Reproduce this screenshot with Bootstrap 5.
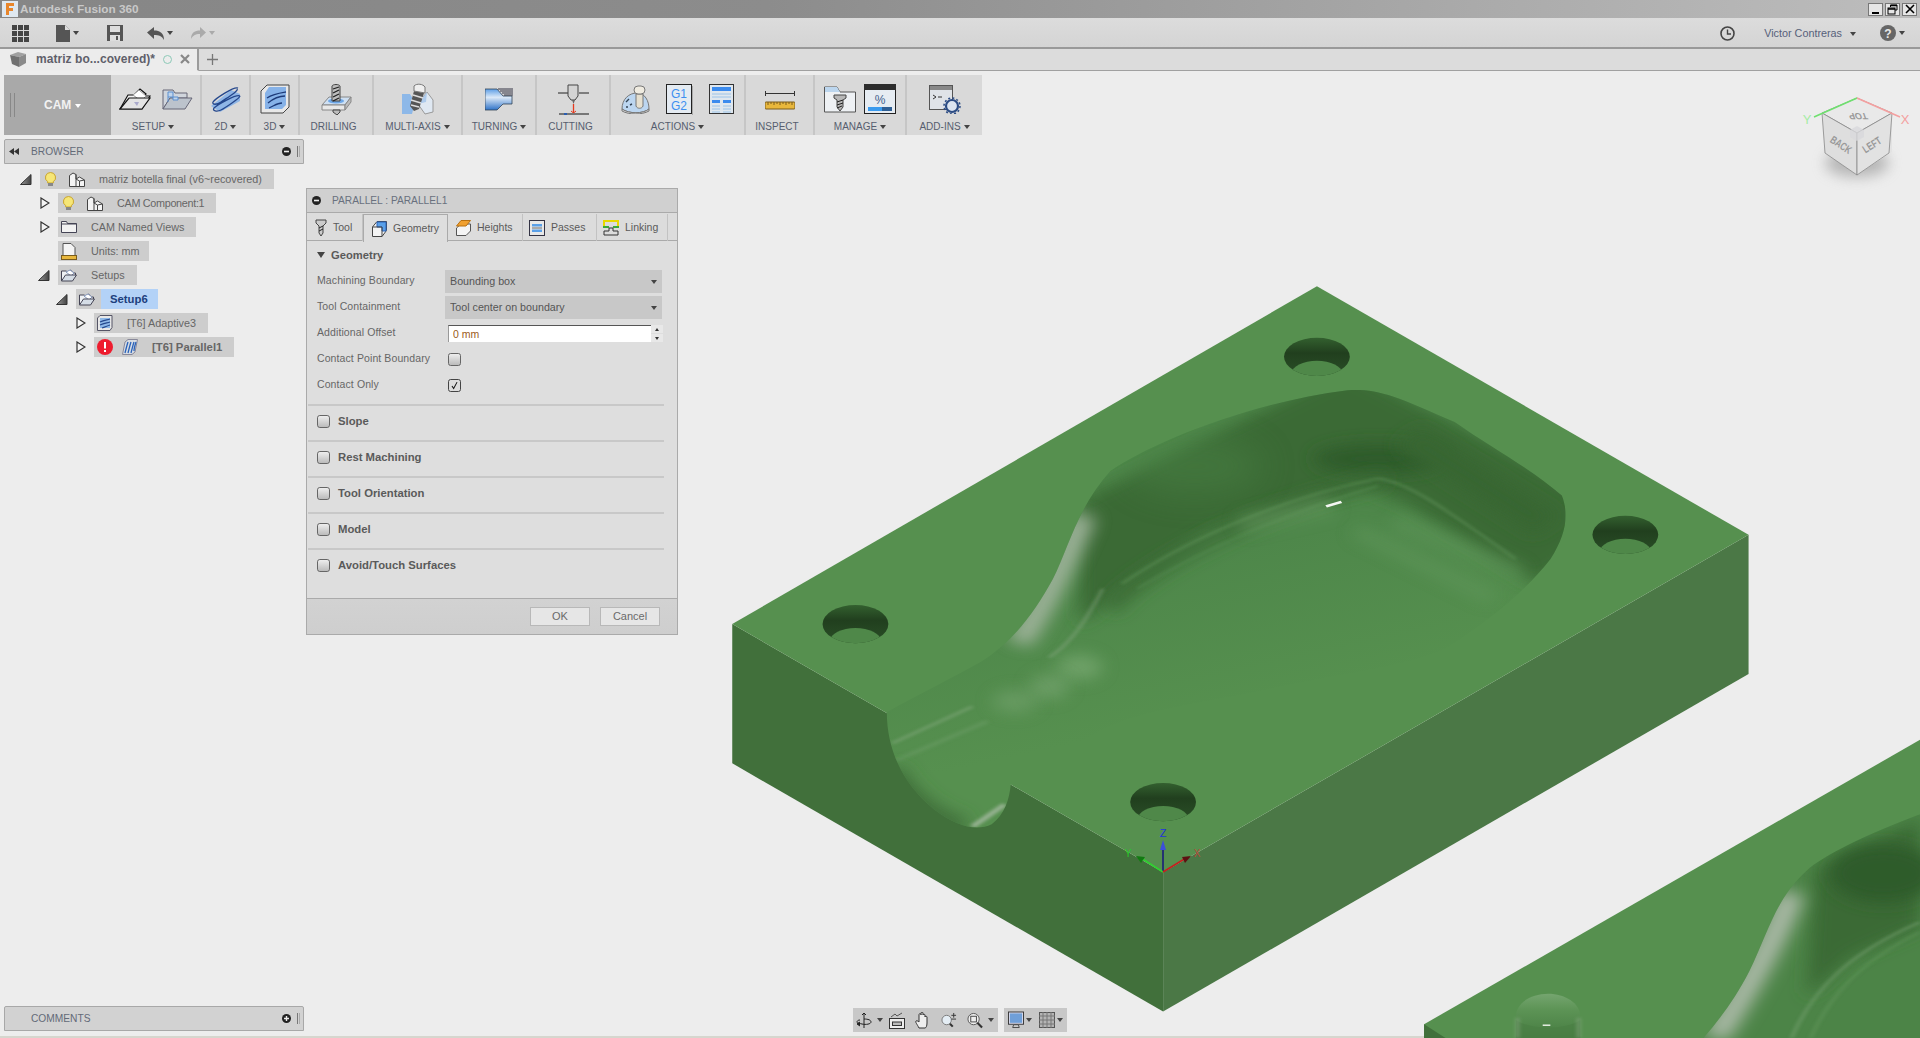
<!DOCTYPE html>
<html lang="en">
<head>
  <meta charset="UTF-8">
  <title>Autodesk Fusion 360</title>
  <link href="https://cdn.jsdelivr.net/npm/bootstrap@5.3.0/dist/css/bootstrap.min.css" rel="stylesheet">
  <style>
    html, body { height: 100%; }
    body { background: #ededed; color: #5a5a5a; font-family: "Liberation Sans", Arial, sans-serif; font-size: 10px; overflow: hidden; }
    svg { display: block; }
    .app-shell { height: 1038px; }
    /* top bars */
    .title-bar { height: 18px; background: linear-gradient(to right, #868686, #8c8c8c 40%, #bdbdbd); padding-left: 2px; }
    .title-text { color: #c9c9c9; font-weight: 700; font-size: 11.8px; margin-left: 2px; line-height: 18px; }
    .win-btn { width: 15px; height: 13px; background: #e6e6e6; border: 1px solid #777; margin-left: 2px; }
    .win-btns { margin-right: 3px; }
    .quick-bar { height: 31px; background: linear-gradient(#dcdcdc, #d4d4d4); border-bottom: 2px solid #999; padding: 1px 0 0 12px; }
    .qb-file { margin-left: 27px; }
    .qb-save { margin-left: 28px; }
    .qb-undo { margin-left: 24px; }
    .qb-redo { margin-left: 18px; }
    .qb-clock { margin-left: auto; margin-right: 29px; }
    .user-name { font-size: 10.8px; color: #56607a; }
    .qb-help { margin-left: 24px; margin-right: 15px; }
    .caret-down { display: inline-block; width: 0; height: 0; border-left: 3px solid transparent; border-right: 3px solid transparent; border-top: 4px solid #444; margin-left: 3px; vertical-align: 1px; }
    .caret-pale { border-top-color: #aaa; }
    .caret-white { border-top-color: #fff; }
    .doc-tabs { height: 22px; background: #dcdcdc; border-bottom: 1px solid #a0a0a0; }
    .doc-tab { width: 199px; height: 22px; background: #ececec; border-right: 2px solid #9c9c9c; padding-left: 10px; border-bottom: 1px solid #ececec; }
    .doc-name { font-size: 12px; color: #5f5f6a; margin-left: 10px; font-weight: 700; letter-spacing: .05px; }
    .doc-status { width: 9px; height: 9px; border: 1.5px solid #8cc9b7; border-radius: 50%; margin-left: 8px; }
    .doc-close { margin-left: 8px; }
    .doc-plus { margin-left: 8px; }
    /* workspace */
    .workspace { height: 967px; border-bottom: 2px solid #d6d6ce; }
    .model-canvas { position: absolute; left: 0; top: 0; }
    .side-col { position: relative; height: 960px; padding-left: 4px; width: 990px; }
    .cam-toolbar { margin-top: 4px; width: 978px; height: 60px; background: #d9d9d9; }
    .cam-block { width: 107px; height: 60px; background: #a9a9a9; color: #f2f2f2; font-size: 12px; font-weight: 700; padding-left: 6px; }
    .grip { width: 5px; height: 24px; border-left: 1px solid #888; border-right: 1px solid #888; }
    .cam-text { margin-left: 29px; }
    .tool-group { height: 60px; border-right: 2px solid #c6c6c6; margin: 0; padding-top: 8px; }
    .tool-group:last-child { border-right: 0; }
    .tool-icons { display: flex; align-items: center; height: 32px; margin-bottom: 6px; }
    .tool-label { color: #565d6e; font-size: 10px; line-height: 12px; white-space: nowrap; }
    .label-left { margin-right: 5px; }
    .gap-setup { gap: 11px; }
    .tg-setup { width: 91px; } .tg-2d, .tg-3d { width: 49px; } .tg-drill { width: 74px; } .tg-multi { width: 89px; } .tg-turn { width: 74px; } .tg-cut { width: 74px; } .tg-act { width: 135px; } .tg-insp { width: 69px; } .tg-man { width: 92px; } .tg-add { width: 75px; }
    .browser-head, .comments-head { width: 300px; background: #d2d2d2; border: 1px solid #a8a8a8; border-radius: 2px 2px 0 0; color: #636a78; font-size: 10.2px; }
    .browser-head { height: 25px; margin-top: 4px; padding-left: 4px; }
    .comments-head { height: 25px; margin-top: auto; padding-left: 26px; }
    .head-text { margin-left: 12px; }
    .head-grip { width: 3px; height: 11px; border-left: 1px solid #777; border-right: 1px solid #aaa; margin: 0 3px 0 6px; }
    /* tree */
    .tree-list { margin-top: 5px; }
    .tree-row { height: 20px; margin-bottom: 4px; }
    .lv0 { padding-left: 16px; } .lv1 { padding-left: 34px; } .lv2 { padding-left: 52px; } .lv3 { padding-left: 70px; }
    .tree-toggle { width: 20px; flex: none; }
    .tree-chip { height: 20px; background: #cdcdcd; color: #666; font-size: 10.8px; white-space: nowrap; padding-left: 3px; }
    .chip-end { padding-right: 12px; }
    .chip-tight { padding-right: 9px; }
    .chip-bulb { padding-left: 5px; }
    .ms-bulb { margin-left: 13px; }
    .ms-text { margin-left: 14px; }
    .ms-icon { margin-left: 9px; }
    .text-tight { letter-spacing: -.3px; }
    .tree-blue { height: 20px; background: #b3d2f7; color: #1d3f7d; margin-left: 6px; padding: 0 10px 0 9px; line-height: 20px; }
    .tree-strong { font-weight: 700; font-size: 11.3px; }
    .no-toggle { margin-left: 20px; }
    /* dialog */
    .op-dialog { position: absolute; left: 306px; top: 117px; width: 372px; height: 447px; background: #dedede; border: 1px solid #aaa; }
    .op-title { height: 24px; background: #d0d0d0; border-bottom: 1px solid #aaa; padding-left: 5px; color: #69707e; font-size: 10.2px; }
    .op-title span { margin-left: 11px; }
    .op-tabs { height: 28px; background: #dcdcdc; border-bottom: 1px solid #aaa; padding-top: 1px; flex-wrap: nowrap; }
    .op-tabs .nav-item { height: 27px; }
    .op-tabs .nav-link { height: 27px; margin: 0; padding: 0 0 0 8px; border: 0; border-right: 1px solid #c2c2c2; border-radius: 0; color: #5a5a5a; font-size: 10.5px; background: transparent; display: flex; align-items: center; gap: 6px; }
    .op-tabs .nav-link.active { background: #dedede; border: 1px solid #aaa; border-bottom: 0; height: 28px; color: #5a5a5a; }
    .tb-tool { width: 56px; } .tb-geo { width: 85px; } .tb-hei { width: 75px; } .tb-pas { width: 74px; } .tb-lin { width: 71px; }
    .op-tabs .nav-link.tb-pas { padding-left: 6px; }
    .op-tabs .nav-link.tb-lin { padding-left: 6px; }
    .op-body { padding: 4px 0 0; height: 357px; }
    .geo-head { font-size: 11.2px; font-weight: 700; color: #5a5a5a; padding-left: 10px; height: 20px; margin-bottom: 3px; }
    .tri-down { width: 0; height: 0; border-left: 4.5px solid transparent; border-right: 4.5px solid transparent; border-top: 6px solid #444; margin-right: 6px; }
    .field-row { height: 26px; padding-left: 10px; font-size: 10.5px; color: #666; }
    .field-label { width: 128px; flex: none; letter-spacing: .1px; }
    .field-box { width: 217px; height: 23px; background: #c8c8c8; position: relative; }
    .field-box .form-select { height: 23px; padding: 0 0 0 5px; border: 0; border-radius: 1px; background: transparent; font-size: 10.7px; color: #555; box-shadow: none; }
    .field-box::after { content: ""; position: absolute; right: 5px; top: 10px; border-left: 3px solid transparent; border-right: 3px solid transparent; border-top: 4px solid #444; }
    .num-wrap { margin-left: 3px; }
    .num-wrap .form-control { width: 203px; height: 17px; padding: 0 0 0 4px; font-size: 10.5px; border: 0; border-top: 1px solid #555; border-left: 1px solid #999; border-radius: 0; color: #9a5a20; min-height: 0; box-shadow: none; }
    .spin-col { width: 12px; height: 17px; }
    .spin-up, .spin-dn { height: 8px; background: #e8e8e8; position: relative; }
    .spin-dn { margin-top: 1px; }
    .spin-up::after, .spin-dn::after { content: ""; position: absolute; left: 4px; top: 3px; border-left: 2px solid transparent; border-right: 2px solid transparent; }
    .spin-up::after { border-bottom: 3px solid #333; }
    .spin-dn::after { border-top: 3px solid #333; }
    .mold-check { width: 13px; height: 13px; margin: 0; border: 1px solid #666; border-radius: 3px; background-color: #d6d6d6; background-image: linear-gradient(#eee, #bbb); flex: none; }
    .mold-check:checked { background-color: #ddd; border-color: #444; background-image: url("data:image/svg+xml,%3csvg xmlns='http://www.w3.org/2000/svg' viewBox='0 0 13 13'%3e%3cpath fill='none' stroke='%23111' stroke-width='1.2' d='M3.5 7l2 3L9.5 2.5'/%3e%3c/svg%3e"); background-size: 100% 100%; }
    .check-offset { margin-left: 3px; }
    .sect-list { margin-top: 6px; }
    .sect-row { height: 36px; margin: 0 13px 0 1px; border-top: 2px solid #c8c8c8; padding: 0 0 4px 9px; font-size: 11.3px; font-weight: 700; color: #5a5a5a; gap: 8px; }
    .op-foot { height: 36px; background: linear-gradient(#d2d2d2, #cecece); border-top: 1px solid #aaa; padding-right: 17px; gap: 10px; }
    .foot-btn { width: 60px; height: 19px; padding: 0; border: 1px solid #b8b8b8; border-radius: 0; background: #e6e6e6; color: #6a6a6a; font-size: 11px; line-height: 17px; }
    /* view tools */
    .view-cube { position: absolute; left: 1800px; top: 20px; }
    .nav-tools { position: absolute; left: 853px; top: 937px; gap: 6px; }
    .nav-seg { height: 24px; background: #c8c8c8; }
    .seg-a { width: 145px; padding-left: 3px; } .seg-b { width: 63px; padding-left: 4px; }
    .nav-seg .nm-2 { margin-left: 2px; } .nav-seg .nm-5 { margin-left: 5px; } .nav-seg .nm-6 { margin-left: 6px; } .nav-seg .nm-7 { margin-left: 7px; } .nav-seg .nm-10 { margin-left: 10px; }
  </style>
</head>
<body>
<div class="app-shell d-flex flex-column">
  <!-- window title -->
  <div class="title-bar d-flex align-items-center">
    <svg width="16" height="16" viewBox="0 0 16 16"><rect width="16" height="16" fill="#dfe8f0"/><path d="M4 2h8v3H7v2h4v3H7v4H4z" fill="#e8862c"/></svg>
    <div class="title-text">Autodesk Fusion 360</div>
    <div class="win-btns d-flex ms-auto">
      <div class="win-btn d-flex align-items-end justify-content-center"><svg width="9" height="9" viewBox="0 0 9 9"><rect x="1" y="6" width="7" height="2" fill="#000"/></svg></div>
      <div class="win-btn d-flex align-items-center justify-content-center"><svg width="11" height="11" viewBox="0 0 11 11" fill="none" stroke="#000"><path d="M3.5 3V1h6.5v5H8"/><rect x="1" y="4" width="7" height="6"/><path d="M1 5h7M3.5 1.5h6.5" stroke-width="1.4"/></svg></div>
      <div class="win-btn d-flex align-items-center justify-content-center"><svg width="10" height="10" viewBox="0 0 10 10" stroke="#000" stroke-width="1.6"><path d="M1 1l8 8M9 1l-8 8"/></svg></div>
    </div>
  </div>

  <!-- quick access -->
  <div class="quick-bar d-flex align-items-center">
    <svg width="17" height="17" viewBox="0 0 17 17" fill="#444"><rect width="5" height="5"/><rect x="6" width="5" height="5"/><rect x="12" width="5" height="5"/><rect y="6" width="5" height="5"/><rect x="6" y="6" width="5" height="5"/><rect x="12" y="6" width="5" height="5"/><rect y="12" width="5" height="5"/><rect x="6" y="12" width="5" height="5"/><rect x="12" y="12" width="5" height="5"/></svg>
    <div class="qb-file d-flex align-items-center"><svg width="14" height="17" viewBox="0 0 14 17"><path d="M0 0h9l5 5v12H0z" fill="#555"/><path d="M9 0l5 5H9z" fill="#ddd"/></svg><span class="caret-down"></span></div>
    <svg class="qb-save" width="16" height="16" viewBox="0 0 16 16"><path d="M0 0h16v16H0z" fill="#555"/><rect x="3" y="1" width="10" height="6" fill="#ddd"/><rect x="3" y="10" width="10" height="6" fill="#ddd"/><rect x="9" y="11" width="2" height="4" fill="#555"/></svg>
    <div class="qb-undo d-flex align-items-center"><svg width="17" height="13" viewBox="0 0 17 13"><path d="M7 0v3.500c6 0 10 2.500 10 9.500-2-4-5-5-10-5v4L0 5.500z" fill="#555"/></svg><span class="caret-down"></span></div>
    <div class="qb-redo d-flex align-items-center"><svg width="15" height="12" viewBox="0 0 15 12"><path d="M9 0v3.500c-5 0-9 2-9 8.500 2-3.500 4-5 9-5v4l6-5.500z" fill="#aaa"/></svg><span class="caret-down caret-pale"></span></div>
    <svg class="qb-clock" width="15" height="15" viewBox="0 0 15 15" fill="none" stroke="#444"><circle cx="7.500" cy="7.500" r="6.500" stroke-width="1.600"/><path d="M7.500 3.500v4.500h3.500" stroke-width="1.400"/></svg>
    <div class="user-name">Victor Contreras<span class="caret-down ms-2"></span></div>
    <div class="qb-help d-flex align-items-center"><svg width="16" height="16" viewBox="0 0 16 16"><circle cx="8" cy="8" r="8" fill="#666"/><text x="8" y="12.500" text-anchor="middle" fill="#e8e8e8" font-family="Liberation Sans" font-size="12" font-weight="700">?</text></svg><span class="caret-down"></span></div>
  </div>

  <!-- document tabs -->
  <div class="doc-tabs d-flex align-items-center">
    <div class="doc-tab d-flex align-items-center">
      <svg width="16" height="15" viewBox="0 0 16 15"><path d="M0 3l8-3 8 2-7 3z" fill="#a0a0a0"/><path d="M0 3l9 2v10L2 12z" fill="#707070"/><path d="M9 5l7-3v9l-7 4z" fill="#8a8a8a"/></svg>
      <span class="doc-name">matriz bo...covered)*</span>
      <span class="doc-status"></span>
      <svg class="doc-close" width="10" height="10" viewBox="0 0 10 10" stroke="#888" stroke-width="2.200"><path d="M1 1l8 8M9 1l-8 8"/></svg>
    </div>
    <svg class="doc-plus" width="11" height="11" viewBox="0 0 11 11" stroke="#777" stroke-width="1.300"><path d="M5.500 0v11M0 5.500h11"/></svg>
  </div>

  <div class="workspace position-relative">
    <!-- 3d model canvas -->
    <svg class="model-canvas" width="1920" height="967" viewBox="0 71 1920 967">
      <defs>
        <filter id="soft1" filterUnits="userSpaceOnUse" x="0" y="0" width="1600" height="1600"><feGaussianBlur stdDeviation="3"/></filter>
        <filter id="soft2" filterUnits="userSpaceOnUse" x="0" y="0" width="1600" height="1600"><feGaussianBlur stdDeviation="11 16"/></filter>
        <filter id="soft3" filterUnits="userSpaceOnUse" x="0" y="0" width="1600" height="1600"><feGaussianBlur stdDeviation="22 34"/></filter>
        <linearGradient id="holeShade" x1="0" y1="0" x2="0" y2="1"><stop offset="0" stop-color="#33602f"/><stop offset=".4" stop-color="#213f1e"/><stop offset="1" stop-color="#2a4f27"/></linearGradient>
        <linearGradient id="pocketBase" gradientUnits="userSpaceOnUse" x1="700" y1="560" x2="800" y2="850"><stop offset="0" stop-color="#4e874a"/><stop offset="1" stop-color="#56904f"/></linearGradient>
        <linearGradient id="pinFill" x1="0" y1="0" x2="0" y2="1"><stop offset="0" stop-color="#75a56f"/><stop offset=".35" stop-color="#5d9456"/><stop offset="1" stop-color="#467c41"/></linearGradient>
        <clipPath id="pocketClip"><path id="pocketPath" d="M218 902C260 865 300 835 340 800C385 755 410 700 435 630C455 570 465 490 510 410C560 355 690 270 820 245C860 242 880 255 960 310C1010 365 1060 405 1100 460C1110 500 1105 540 1085 590C1050 660 1000 720 950 770C900 810 800 825 700 860C620 885 540 900 490 945L380 1048C378 1080 372 1110 355 1130C335 1145 310 1135 280 1100C240 1050 218 980 218 902Z"/></clipPath>
        <clipPath id="holeClip"><ellipse cx="0" cy="0" rx="43" ry="39"/></clipPath>
        <g id="drillHole">
          <ellipse rx="43" ry="39" fill="url(#holeShade)"/>
          <g clip-path="url(#holeClip)"><ellipse cx="0" cy="34" rx="33" ry="26" fill="#4f8849"/></g>
        </g>
        <clipPath id="pocket2"><path d="M1568 1110C1500 1150 1440 1195 1420 1225C1380 1280 1370 1350 1345 1430C1325 1490 1305 1530 1285 1566H1568Z"/></clipPath>
      </defs>
      <g transform="translate(720 270) scale(.7653 .4904)">
        <!-- block faces -->
        <path d="M16 722L579 1228V1512L16 1006Z" fill="#41703b"/>
        <path d="M579 1228L1344 540V824L579 1512Z" fill="#4b7846"/>
        <path d="M780 33L1344 540L579 1228L16 722Z" fill="#56904f"/>
        <!-- pocket -->
        <use href="#pocketPath" fill="url(#pocketBase)"/>
        <g clip-path="url(#pocketClip)">
          <path d="M470 470L820 200L1140 460L1120 580L1065 640L900 480L840 440L640 530L530 650L470 720Z" fill="#3a6a35" filter="url(#soft2)"/>
          <ellipse cx="620" cy="400" rx="90" ry="60" fill="#4c8347" opacity=".45" filter="url(#soft3)"/>
          <ellipse cx="860" cy="385" rx="85" ry="30" fill="#2d5b29" filter="url(#soft2)"/>
          <path d="M900 340L1080 520" fill="none" stroke="#376633" stroke-width="50" filter="url(#soft2)"/>
          <path d="M510 690C560 600 700 490 870 425" fill="none" stroke="#3a6a34" stroke-width="22" filter="url(#soft2)"/>
          <path d="M525 640C600 560 720 470 860 425C900 432 950 490 1040 590" fill="none" stroke="#6a9d64" stroke-width="3" opacity=".7" filter="url(#soft1)"/>
          <path d="M545 650C620 580 730 500 860 440" fill="none" stroke="#5f955a" stroke-width="3" opacity=".6" filter="url(#soft1)"/>
          <path d="M830 530L1010 670M880 510L1050 620" fill="none" stroke="#649a5e" stroke-width="22" opacity=".6" filter="url(#soft2)"/>
          <path d="M680 520L800 478" fill="none" stroke="#6fa269" stroke-width="30" opacity=".5" filter="url(#soft2)"/>
          <path d="M475 500C450 590 425 680 390 760" fill="none" stroke="#a8b8a4" stroke-width="36" opacity=".85" filter="url(#soft2)"/>
          <path d="M500 650C480 710 460 760 430 790" fill="none" stroke="#8fab8a" stroke-width="3" opacity=".7" filter="url(#soft1)"/>
          <ellipse cx="470" cy="810" rx="30" ry="25" fill="#7bab75" opacity=".7" filter="url(#soft2)"/>
          <ellipse cx="430" cy="850" rx="26" ry="24" fill="#77a571" opacity=".7" filter="url(#soft2)"/>
          <ellipse cx="385" cy="880" rx="30" ry="22" fill="#77a571" opacity=".6" filter="url(#soft2)"/>
          <path d="M225 965L330 890" fill="none" stroke="#7ea678" stroke-width="5" opacity=".7" filter="url(#soft1)"/>
          <path d="M230 1000L350 920" fill="none" stroke="#6c9d66" stroke-width="8" opacity=".5" filter="url(#soft1)"/>
          <path d="M225 1020C240 1070 280 1120 320 1135" fill="none" stroke="#3c6c37" stroke-width="30" filter="url(#soft2)"/>
          <path d="M330 1135L372 1090" fill="none" stroke="#a9bca5" stroke-width="8" opacity=".8" filter="url(#soft1)"/>
          <path d="M792 482L812 473" stroke="#f4f6f2" stroke-width="5" fill="none"/>
        </g>
        <!-- holes -->
        <use href="#drillHole" x="780" y="177"/>
        <use href="#drillHole" x="1183" y="540"/>
        <use href="#drillHole" x="177" y="722"/>
        <use href="#drillHole" x="579" y="1085"/>
        <!-- second block -->
        <path d="M1568 958L920 1538V1566H1568Z" fill="#56904f"/>
        <path d="M920 1538V1566H948Z" fill="#41703b"/>
        <g clip-path="url(#pocket2)">
          <rect x="1280" y="1100" width="290" height="470" fill="#4c8447"/>
          <path d="M1430 1220L1568 1120V1340L1480 1400L1420 1480Z" fill="#3a6a36" filter="url(#soft2)"/>
          <ellipse cx="1520" cy="1230" rx="70" ry="60" fill="#2f5c2c" filter="url(#soft2)"/>
          <path d="M1400 1270C1380 1360 1340 1470 1300 1566" fill="none" stroke="#a8b8a4" stroke-width="36" filter="url(#soft2)"/>
          <path d="M1568 1330C1480 1390 1430 1460 1400 1566" fill="none" stroke="#7ea678" stroke-width="3" opacity=".8" filter="url(#soft1)"/>
          <path d="M1568 1350C1490 1410 1450 1480 1425 1566" fill="none" stroke="#6a9d64" stroke-width="3" opacity=".7" filter="url(#soft1)"/>
        </g>
        <path d="M1040 1566V1522C1040 1495 1060 1476 1082 1476S1124 1495 1124 1522V1566Z" fill="url(#pinFill)"/>
        <path d="M1040 1530C1060 1550 1104 1550 1124 1530V1566H1040Z" fill="#4a7f45" opacity=".7"/>
        <path d="M1042 1566V1525M1122 1566V1525" stroke="#93ae8f" stroke-width="3" opacity=".8" filter="url(#soft1)"/>
        <path d="M1075 1540h10" stroke="#e8f0e6" stroke-width="3"/>
      </g>
      <!-- origin triad -->
      <g fill="none" stroke-width="1.500" font-family="Liberation Sans" font-size="11">
        <path d="M1163 872V845" stroke="#14147c"/>
        <path d="M1163 840l-3 10h6z" fill="#3c4fd8" stroke="none"/>
        <path d="M1163 872l-22-14" stroke="#2fd22f"/>
        <path d="M1136 856l9 1-4 6z" fill="#127a12" stroke="none"/>
        <path d="M1163 872l23-14" stroke="#c81e1e"/>
        <path d="M1191 856l-9 1 3 6z" fill="#5c1212" stroke="none"/>
        <text x="1163" y="837" fill="#2233dd" stroke="none" text-anchor="middle">Z</text>
        <text x="1128" y="857" fill="#28c828" stroke="none" text-anchor="middle" font-size="10">Y</text>
        <text x="1197" y="857" fill="#b84a3a" stroke="none" text-anchor="middle" font-size="10">X</text>
      </g>
    </svg>

    <div class="side-col d-flex flex-column">
      <!-- ribbon -->
      <div class="cam-toolbar d-flex">
        <div class="cam-block d-flex align-items-center"><div class="grip"></div><div class="cam-text">CAM<span class="caret-down caret-white ms-1"></span></div></div>
        <div class="tool-group tg-setup d-flex flex-column align-items-center">
          <div class="tool-icons gap-setup">
            <svg width="32" height="23" viewBox="0 0 32 23"><path d="M1 21L9 7h6l6-6 6 5-1 2h5l-8 13z" fill="#f2f2f2" stroke="#111" stroke-width="1.200"/><path d="M14 7l6-5 7 6-5 5z" fill="#fff" stroke="#999"/><path d="M1 21l9-11h21l-8 11z" fill="#e4e4e4" stroke="#111" stroke-width="1.200"/><path d="M15 14l5 0-2 4z" fill="#aac"/></svg>
            <svg width="31" height="21" viewBox="0 0 31 21"><path d="M1 20V1h10l2 3h12v5H8z" fill="#d0d5dc" stroke="#667"/><path d="M1 20l7-11h22l-7 11z" fill="#bcc3cc" stroke="#667"/><path d="M6 3h5v5H6zM11 8h5v3h-5zM6 8v5" fill="#c0d4ec" stroke="#5a8fd0"/></svg>
          </div>
          <div class="tool-label label-left">SETUP<span class="caret-down"></span></div>
        </div>
        <div class="tool-group tg-2d d-flex flex-column align-items-center">
          <div class="tool-icons">
            <svg width="31" height="26" viewBox="0 0 31 26"><path d="M1 20L21 4l9 4v7L10 26z" fill="#8fb6e6"/><path d="M28 2C24 0 5 13 3 16c-1 3 4 3 8 0s18-11 16-13M30 10C26 8 7 19 4 22c-2 3 3 4 7 2s19-12 19-14" fill="none" stroke="#24478c" stroke-width="1.300"/></svg>
          </div>
          <div class="tool-label">2D<span class="caret-down"></span></div>
        </div>
        <div class="tool-group tg-3d d-flex flex-column align-items-center">
          <div class="tool-icons">
            <svg width="30" height="30" viewBox="0 0 30 30"><path d="M1 7L7 1h22v22l-6 6H1z" fill="#e8e8e8" stroke="#444"/><path d="M5 9l4-6h17v18l-4 4H5z" fill="#86b2e8"/><path d="M7 14c6-4 13-5 19-6M8 19c6-5 11-7 17-7M9 24c5-2 8-5 13-5" fill="none" stroke="#1d3a78" stroke-width="1.300"/></svg>
          </div>
          <div class="tool-label">3D<span class="caret-down"></span></div>
        </div>
        <div class="tool-group tg-drill d-flex flex-column align-items-center">
          <div class="tool-icons">
            <svg width="31" height="31" viewBox="0 0 31 31"><path d="M1 21L8 13h22l-6 8z" fill="#cfe0f2" stroke="#888"/><path d="M1 21h23v5H1z" fill="#e8e8e8" stroke="#888"/><path d="M24 21l6-8v5l-6 8z" fill="#bbb" stroke="#888"/><ellipse cx="15" cy="17" rx="8" ry="2.500" fill="#6fa8e8"/><path d="M11 2c1-2 7-2 8 0v15h-8zM12 26h7v2l-3 3-4-3z" fill="#bdbdbd" stroke="#444"/><path d="M12 5l6-2M12 9l6-3M12 13l6-3M12 17l6-3" stroke="#222" stroke-width="1.300"/></svg>
          </div>
          <div class="tool-label label-left">DRILLING</div>
        </div>
        <div class="tool-group tg-multi d-flex flex-column align-items-center">
          <div class="tool-icons">
            <svg width="33" height="32" viewBox="0 0 33 32"><path d="M1 11h8l5 8-3 12H1z" fill="#8db8e8"/><path d="M26 9l6 8v12l-8 2-7-10z" fill="#dfe8f2" stroke="#999"/><path d="M17 21l9-12-1 10z" fill="#aecbec"/><path d="M13 8l10 2-5 16-5 2-4-5z" fill="#555"/><path d="M12 12l10 3M10 17l10 3M10 22l8 2" stroke="#ddd" stroke-width="1.500"/><path d="M13 3c3-3 9-2 11 1v6l-11-2z" fill="#efefef" stroke="#777"/></svg>
          </div>
          <div class="tool-label">MULTI-AXIS<span class="caret-down"></span></div>
        </div>
        <div class="tool-group tg-turn d-flex flex-column align-items-center">
          <div class="tool-icons">
            <svg width="28" height="23" viewBox="0 0 28 23"><defs><linearGradient id="turnFill" x1="0" y1="0" x2="0" y2="1"><stop offset="0" stop-color="#5d9ee6"/><stop offset=".4" stop-color="#dbe9f8"/><stop offset="1" stop-color="#2f73c8"/></linearGradient></defs><path d="M0 1h12l6 7h9v8h-9l-6 6H0z" fill="url(#turnFill)" stroke="#345" stroke-width=".8"/><path d="M13 1h15M15 3h13M17 5h11M19 7h9" stroke="#223" stroke-width=".9"/></svg>
          </div>
          <div class="tool-label">TURNING<span class="caret-down"></span></div>
        </div>
        <div class="tool-group tg-cut d-flex flex-column align-items-center">
          <div class="tool-icons">
            <svg width="31" height="31" viewBox="0 0 31 31"><path d="M0 9h10M21 9h10" stroke="#222"/><path d="M10 1h10v11l-3 4h-4l-3-4z" fill="#d4d4d4" stroke="#444"/><path d="M14 16h3l-1.500 4z" fill="#666"/><path d="M15.500 20v9" stroke="#e63a1e" stroke-width="1.300"/><path d="M13 27l2.500 2 2.500-2" fill="none" stroke="#e63a1e"/><rect x="1" y="29" width="30" height="2" fill="#777"/><rect x="6" y="29" width="3" height="2" fill="#2a5db0"/></svg>
          </div>
          <div class="tool-label label-left">CUTTING</div>
        </div>
        <div class="tool-group tg-act d-flex flex-column align-items-center">
          <div class="tool-icons gap-3">
            <svg width="29" height="29" viewBox="0 0 29 29"><path d="M1 24C1 14 8 8 16 8c8 0 12 8 12 16-6 5-20 5-27 0z" fill="#bcd6f0" stroke="#777"/><path d="M1 24c7 5 21 5 27 0v2c-7 4-20 4-27 0z" fill="#ddd" stroke="#777"/><path d="M15 9h7v12c-1 3-6 3-7 0z" fill="#e6e0d0" stroke="#777"/><rect x="13" y="1" width="11" height="8" rx="4" fill="#efebe0" stroke="#777"/><path d="M5 17l3-3M9 20l2-1M5 22h2" stroke="#345" stroke-width="1.400"/></svg>
            <svg width="27" height="31" viewBox="0 0 27 31"><rect x=".5" y=".5" width="25" height="29" fill="#e4ebf2" stroke="#222"/><rect x="26" y="2" width="1" height="29" fill="#aaa"/><text x="13" y="13.500" text-anchor="middle" fill="#3d8ff0" font-family="Liberation Sans" font-size="12">G1</text><text x="13" y="26" text-anchor="middle" fill="#3d8ff0" font-family="Liberation Sans" font-size="12">G2</text></svg>
            <svg width="26" height="31" viewBox="0 0 26 31"><rect x=".5" y=".5" width="24" height="29" fill="#dfe7ee" stroke="#333"/><rect x="3" y="3" width="19" height="4" fill="#3b8bee"/><path d="M3 10h19M3 13h19M3 22h8M14 22h8M3 25h8M14 25h8M3 28h8M14 28h8" stroke="#9cc4e8"/><rect x="3" y="16" width="8" height="3" fill="#3b8bee"/><rect x="14" y="16" width="8" height="3" fill="#3b8bee"/></svg>
          </div>
          <div class="tool-label">ACTIONS<span class="caret-down"></span></div>
        </div>
        <div class="tool-group tg-insp d-flex flex-column align-items-center">
          <div class="tool-icons">
            <svg class="ruler-ico" width="30" height="26" viewBox="0 0 30 26"><path d="M.500 5v5M29.500 5v5M0 7.500h30" stroke="#333"/><rect x="0" y="16" width="30" height="7" rx="1" fill="#e8b73c" stroke="#7a5c1c"/><path d="M3 16v3M6 16v2M9 16v3M12 16v2M15 16v3M18 16v2M21 16v3M24 16v2M27 16v3" stroke="#7a5c1c"/></svg>
          </div>
          <div class="tool-label label-left">INSPECT</div>
        </div>
        <div class="tool-group tg-man d-flex flex-column align-items-center">
          <div class="tool-icons gap-2">
            <svg width="32" height="28" viewBox="0 0 32 28"><path d="M.500 2v25h31V7H16l-3-5z" fill="#eef1f4" stroke="#555"/><path d="M1 2h12l3 5h-15z" fill="#bcd6ee"/><path d="M10 10h12v3l-3 2v7l-3 4-3-4v-7l-3-2z" fill="#b8b8b8" stroke="#444"/><path d="M13 17l6-2M13 20l6-2M13 23l5-2" stroke="#222"/></svg>
            <svg width="32" height="31" viewBox="0 0 32 31"><rect x=".5" y=".5" width="31" height="29" fill="#e6ecf2" stroke="#222"/><rect x="0" y="0" width="32" height="6" fill="#2c2c2c"/><text x="16" y="20" text-anchor="middle" fill="#44618c" font-family="Liberation Sans" font-size="12">%</text><rect x="4" y="23" width="24" height="4" fill="#2f5f94"/><rect x="4" y="23" width="14" height="4" fill="#3b9bee"/></svg>
          </div>
          <div class="tool-label">MANAGE<span class="caret-down"></span></div>
        </div>
        <div class="tool-group tg-add d-flex flex-column align-items-center">
          <div class="tool-icons">
            <svg width="32" height="29" viewBox="0 0 32 29"><rect x=".5" y=".5" width="23" height="24" fill="#dfe3e8" stroke="#555"/><rect x="1" y="1" width="22" height="4" fill="#888"/><path d="M4 10l3 2-3 2M9 12h4" fill="none" stroke="#333"/><circle cx="23" cy="21" r="6" fill="#dbe4f0" stroke="#2c4c84" stroke-width="2.200"/><circle cx="23" cy="21" r="8" fill="none" stroke="#2c4c84" stroke-width="1.500" stroke-dasharray="2 2.200"/></svg>
          </div>
          <div class="tool-label">ADD-INS<span class="caret-down"></span></div>
        </div>
      </div>

      <!-- browser -->
      <div class="browser-head d-flex align-items-center">
        <svg width="10" height="7" viewBox="0 0 10 7" fill="#333"><path d="M5 0v7L0 3.500zM10 0v7L5 3.500z"/></svg>
        <span class="head-text">BROWSER</span>
        <svg class="ms-auto" width="9" height="9" viewBox="0 0 9 9"><circle cx="4.500" cy="4.500" r="4.500" fill="#222"/><rect x="2" y="3.700" width="5" height="1.600" fill="#eee"/></svg>
        <div class="head-grip"></div>
      </div>

      <svg width="0" height="0" class="position-absolute">
        <defs>
          <symbol id="triOpen" viewBox="0 0 12 11"><defs><linearGradient id="triFill" x1="0" y1="0" x2="1" y2="0"><stop offset="0" stop-color="#999"/><stop offset="1" stop-color="#444"/></linearGradient></defs><path d="M11 .5V10.500H.5z" fill="url(#triFill)" stroke="#333"/></symbol>
          <symbol id="triShut" viewBox="0 0 10 12"><path d="M1 1l8 5-8 5z" fill="#f4f4f4" stroke="#333" stroke-width="1.200"/></symbol>
          <symbol id="bulb" viewBox="0 0 11 14"><path d="M5.500 .5a5 5 0 0 1 2.800 9.200V11H2.700V9.700A5 5 0 0 1 5.500 .5z" fill="#f6e676" stroke="#c8a430"/><rect x="3" y="11" width="5" height="3" fill="#888"/></symbol>
          <symbol id="boxes" viewBox="0 0 16 15"><path d="M.500 3.500L4 1l3 1.500V7L10.500 5l5 3v6.500H.500z" fill="#f4f4f4" stroke="#444"/><path d="M7 2.500V14.500M10.500 9l5-1M7 7l3.500 2v5.500" fill="none" stroke="#444"/></symbol>
          <symbol id="setupOpen" viewBox="0 0 16 13"><path d="M.5 12V2h5l1 1 3-2 3 3h2v2" fill="#eef1f4" stroke="#445"/><path d="M5 3l4-2 4 3-3 3z" fill="#fff" stroke="#89b"/><path d="M.5 12l4-6h11l-4 6z" fill="#d5dde6" stroke="#445"/></symbol>
        </defs>
      </svg>

      <div class="tree-list">
        <div class="tree-row lv0 d-flex align-items-center">
          <svg class="tree-toggle" width="20" height="11" viewBox="0 0 20 11"><use href="#triOpen" width="12" height="11"/></svg>
          <div class="tree-chip chip-bulb d-flex align-items-center chip-end">
            <svg width="11" height="14"><use href="#bulb" width="11" height="14"/></svg>
            <svg class="ms-bulb" width="16" height="15"><use href="#boxes" width="16" height="15"/></svg>
            <span class="ms-text">matriz botella final (v6~recovered)</span>
          </div>
        </div>
        <div class="tree-row lv1 d-flex align-items-center">
          <svg class="tree-toggle" width="20" height="12" viewBox="0 0 20 12"><use href="#triShut" x="2" width="10" height="12"/></svg>
          <div class="tree-chip chip-bulb d-flex align-items-center chip-end">
            <svg width="11" height="14"><use href="#bulb" width="11" height="14"/></svg>
            <svg class="ms-bulb" width="16" height="15"><use href="#boxes" width="16" height="15"/></svg>
            <span class="ms-text text-tight">CAM Component:1</span>
          </div>
        </div>
        <div class="tree-row lv1 d-flex align-items-center">
          <svg class="tree-toggle" width="20" height="12" viewBox="0 0 20 12"><use href="#triShut" x="2" width="10" height="12"/></svg>
          <div class="tree-chip d-flex align-items-center chip-end">
            <svg width="16" height="12" viewBox="0 0 16 12"><path d="M.5 11.500V.5h5l1 2h9v9z" fill="#f2f2f2" stroke="#445"/><path d="M.5 3h15" stroke="#445"/></svg>
            <span class="ms-text">CAM Named Views</span>
          </div>
        </div>
        <div class="tree-row lv1 d-flex align-items-center">
          <div class="tree-chip d-flex align-items-center chip-tight no-toggle">
            <svg width="16" height="17" viewBox="0 0 16 17"><path d="M2 .5h8l4 4v8H2z" fill="#f4f4f4" stroke="#555"/><rect x=".5" y="12.500" width="15" height="4" fill="#e8b73c" stroke="#7a5c1c"/></svg>
            <span class="ms-text">Units: mm</span>
          </div>
        </div>
        <div class="tree-row lv1 d-flex align-items-center">
          <svg class="tree-toggle" width="20" height="11" viewBox="0 0 20 11"><use href="#triOpen" width="12" height="11"/></svg>
          <div class="tree-chip d-flex align-items-center chip-end">
            <svg width="16" height="13"><use href="#setupOpen" width="16" height="13"/></svg>
            <span class="ms-text">Setups</span>
          </div>
        </div>
        <div class="tree-row lv2 d-flex align-items-center">
          <svg class="tree-toggle" width="20" height="11" viewBox="0 0 20 11"><use href="#triOpen" width="12" height="11"/></svg>
          <div class="tree-chip d-flex align-items-center">
            <svg width="16" height="13"><use href="#setupOpen" width="16" height="13"/></svg>
            <div class="tree-blue tree-strong">Setup6</div>
          </div>
        </div>
        <div class="tree-row lv3 d-flex align-items-center">
          <svg class="tree-toggle" width="20" height="12" viewBox="0 0 20 12"><use href="#triShut" x="2" width="10" height="12"/></svg>
          <div class="tree-chip d-flex align-items-center chip-end">
            <svg width="16" height="16" viewBox="0 0 16 16"><path d="M.5 3L3 .5h12v12L13 15.500H.5z" fill="#e8e8e8" stroke="#556"/><path d="M3 3h10v10H3z" fill="#8db8e8"/><path d="M3 7c4-2 7-2 10-3M3 10c4-2 7-2 10-3M5 13c3-1 5-2 8-3" fill="none" stroke="#24478c" stroke-width="1.200"/></svg>
            <span class="ms-text">[T6] Adaptive3</span>
          </div>
        </div>
        <div class="tree-row lv3 d-flex align-items-center">
          <svg class="tree-toggle" width="20" height="12" viewBox="0 0 20 12"><use href="#triShut" x="2" width="10" height="12"/></svg>
          <div class="tree-chip d-flex align-items-center chip-end">
            <svg width="16" height="16" viewBox="0 0 16 16"><circle cx="8" cy="8" r="8" fill="#ee1c2e"/><rect x="7" y="3" width="2" height="6.500" fill="#fff"/><rect x="7" y="11" width="2" height="2" fill="#fff"/></svg>
            <svg class="ms-icon" width="16" height="16" viewBox="0 0 16 16"><path d="M.5 15.500L3 3 6 .5h9.500L13 13l-3 2.500z" fill="#d8dde4" stroke="#889"/><path d="M3 14c1-4 2-8 3-11M6 14c1-4 2-8 3-11M9 14c1-4 2-8 3-11M12 12c0-3 1-6 2-9" fill="none" stroke="#2a62b8" stroke-width="1.300"/></svg>
            <span class="ms-text tree-strong">[T6] Parallel1</span>
          </div>
        </div>
      </div>

      <!-- comments -->
      <div class="comments-head d-flex align-items-center">
        <span>COMMENTS</span>
        <svg class="ms-auto" width="9" height="9" viewBox="0 0 9 9"><circle cx="4.500" cy="4.500" r="4.500" fill="#222"/><path d="M2 4.500h5M4.500 2v5" stroke="#eee" stroke-width="1.400"/></svg>
        <div class="head-grip"></div>
      </div>
    </div>

    <!-- operation dialog -->
    <div class="op-dialog d-flex flex-column">
      <div class="op-title d-flex align-items-center">
        <svg width="9" height="9" viewBox="0 0 9 9"><circle cx="4.500" cy="4.500" r="4.500" fill="#222"/><rect x="2" y="3.700" width="5" height="1.600" fill="#eee"/></svg>
        <span>PARALLEL : PARALLEL1</span>
      </div>
      <ul class="nav nav-tabs op-tabs">
        <li class="nav-item"><a class="nav-link tb-tool" href="#">
          <svg width="12" height="17" viewBox="0 0 12 17"><path d="M1 1h10v3L8 7v7l-2 3-2-3V7L1 4z" fill="#ccc" stroke="#444"/><path d="M4 9l4-2M4 12l4-2" stroke="#222"/></svg>Tool</a></li>
        <li class="nav-item"><a class="nav-link active tb-geo" href="#">
          <svg width="15" height="16" viewBox="0 0 15 16"><path d="M.5 6L5 .5h9.500v9L10 15.500H.5z" fill="#f4f4f4" stroke="#444"/><path d="M5 1h9v9l-4 0V6H5z" fill="#5aa0e8" stroke="#2a62b8"/><path d="M.5 6H10v9.500" fill="none" stroke="#444"/></svg>Geometry</a></li>
        <li class="nav-item"><a class="nav-link tb-hei" href="#">
          <svg width="15" height="16" viewBox="0 0 15 16"><path d="M.5 8L5 4h9.500v7L10 15.500H.5z" fill="#f4f4f4" stroke="#555"/><path d="M.5 6L5 .5h9.500L10 6z" fill="#f0a030" stroke="#b87010"/></svg>Heights</a></li>
        <li class="nav-item"><a class="nav-link tb-pas" href="#">
          <svg width="16" height="16" viewBox="0 0 16 16"><rect x=".5" y=".5" width="15" height="15" fill="#e8e8e8" stroke="#334"/><rect x="3" y="4" width="10" height="2.500" fill="#5aa0e8"/><rect x="3" y="7" width="10" height="2" fill="#aaa"/><rect x="3" y="9.500" width="10" height="2.500" fill="#5aa0e8"/></svg>Passes</a></li>
        <li class="nav-item"><a class="nav-link tb-lin" href="#">
          <svg width="16" height="16" viewBox="0 0 16 16" fill="none"><path d="M1 6V1h14v5" stroke="#e8d800" stroke-width="2"/><path d="M0 7h6M10 7h6" stroke="#3aa83a" stroke-width="2"/><path d="M6 8h4v3h5v4H1v-4h5z" stroke="#333"/></svg>Linking</a></li>
      </ul>
      <div class="op-body">
        <div class="geo-head d-flex align-items-center"><span class="tri-down"></span>Geometry</div>
        <div class="field-row d-flex align-items-center">
          <div class="field-label">Machining Boundary</div>
          <div class="field-box"><select class="form-select"><option>Bounding box</option></select></div>
        </div>
        <div class="field-row d-flex align-items-center">
          <div class="field-label">Tool Containment</div>
          <div class="field-box"><select class="form-select"><option>Tool center on boundary</option></select></div>
        </div>
        <div class="field-row d-flex align-items-center">
          <div class="field-label">Additional Offset</div>
          <div class="num-wrap d-flex align-items-center">
            <input class="form-control" type="text" value="0 mm">
            <div class="spin-col ms-0"><div class="spin-up"></div><div class="spin-dn"></div></div>
          </div>
        </div>
        <div class="field-row d-flex align-items-center">
          <div class="field-label">Contact Point Boundary</div>
          <input class="form-check-input mold-check check-offset" type="checkbox">
        </div>
        <div class="field-row d-flex align-items-center">
          <div class="field-label">Contact Only</div>
          <input class="form-check-input mold-check check-offset" type="checkbox" checked>
        </div>
        <div class="sect-list">
          <div class="sect-row d-flex align-items-center"><input class="form-check-input mold-check" type="checkbox">Slope</div>
          <div class="sect-row d-flex align-items-center"><input class="form-check-input mold-check" type="checkbox">Rest Machining</div>
          <div class="sect-row d-flex align-items-center"><input class="form-check-input mold-check" type="checkbox">Tool Orientation</div>
          <div class="sect-row d-flex align-items-center"><input class="form-check-input mold-check" type="checkbox">Model</div>
          <div class="sect-row d-flex align-items-center"><input class="form-check-input mold-check" type="checkbox">Avoid/Touch Surfaces</div>
        </div>
      </div>
      <div class="op-foot d-flex align-items-center justify-content-end mt-auto">
        <button class="btn foot-btn" type="button">OK</button>
        <button class="btn foot-btn" type="button">Cancel</button>
      </div>
    </div>

    <!-- view cube -->
    <svg class="view-cube" width="110" height="100" viewBox="1800 91 110 100">
      <defs>
        <filter id="cubeShadow" x="-50%" y="-50%" width="200%" height="200%"><feGaussianBlur stdDeviation="7"/></filter>
      </defs>
      <ellipse cx="1857" cy="163" rx="32" ry="14" fill="#888" opacity=".55" filter="url(#cubeShadow)"/>
      <path d="M1857 98L1892 113V152L1857 175 1825 153 1822 113Z" fill="#e3e3e3"/>
      <path d="M1857 98L1892 113 1857 133 1822 113Z" fill="#e9e9e9" stroke="#888" stroke-width=".8"/>
      <path d="M1822 113L1857 133V175L1825 153Z" fill="#dedede" stroke="#888" stroke-width=".8"/>
      <path d="M1892 113L1857 133V175L1889 153Z" fill="#e2e2e2" stroke="#888" stroke-width=".8"/>
      <path d="M1857 126l7 4v7l-7 4-7-4v-7z" fill="#d8d8dc" opacity=".8"/>
      <path d="M1857 98L1814 117" stroke="#6fe06f" stroke-width="1.600"/>
      <path d="M1857 98L1900 117" stroke="#f4a0a0" stroke-width="1.600"/>
      <text x="1807" y="124" fill="#a5eca5" font-family="Liberation Sans" font-size="13" text-anchor="middle">Y</text>
      <text x="1905" y="124" fill="#f4a0a0" font-family="Liberation Sans" font-size="13" text-anchor="middle">X</text>
      <text transform="translate(1857 113) rotate(180) skewX(20)" fill="#999" font-family="Liberation Sans" font-size="9" font-weight="700" text-anchor="middle">TOP</text>
      <text transform="translate(1839 148) rotate(33) scale(.8 1.100)" fill="#999" font-family="Liberation Sans" font-size="10" font-weight="700" text-anchor="middle">BACK</text>
      <text transform="translate(1874 148) rotate(-33) scale(.8 1.100)" fill="#999" font-family="Liberation Sans" font-size="10" font-weight="700" text-anchor="middle">LEFT</text>
    </svg>

    <!-- navigation bar -->
    <div class="nav-tools d-flex">
      <div class="nav-seg seg-a d-flex align-items-center">
        <svg width="16" height="17" viewBox="0 0 16 17" fill="none" stroke="#222"><path d="M8 1v15M6 3l2-2 2 2"/><path d="M8 7c4 0 7 1 7 3s-5 3-9 2-5-1-5-2 1-2 3-2"/><path d="M4 10l-3 2 3 2" fill="#222"/></svg>
        <span class="caret-down nm-5"></span>
        <svg class="nm-6" width="16" height="17" viewBox="0 0 16 17" fill="none" stroke="#333"><rect x=".5" y="6.500" width="15" height="10" fill="#eee"/><rect x="3.500" y="10" width="9" height="3.500" fill="#bbb"/><path d="M2 5l4-3 2 2 5-3" stroke="#555"/></svg>
        <svg class="nm-10" width="16" height="17" viewBox="0 0 16 17"><path d="M4 16C2 12 0 10 1 9s3 1 3 1V3c0-2 2-2 2 0V1c0-1 2-1 2 0v2c0-1 2-1 2 0v2c0-1 2-1 2 0v6c0 3-1 5-2 5z" fill="#eee" stroke="#333"/></svg>
        <svg class="nm-10" width="16" height="17" viewBox="0 0 17 17" fill="none"><circle cx="6" cy="8" r="5" fill="#e4edf4" stroke="#777"/><path d="M9.500 12l3 3" stroke="#333" stroke-width="2.200"/><path d="M11 3h5M13.500 .5v5M11 7h5" stroke="#333"/></svg>
        <svg class="nm-10" width="16" height="17" viewBox="0 0 17 17" fill="none"><circle cx="7" cy="7" r="6" fill="#eee" stroke="#555"/><rect x="4" y="4" width="6" height="6" fill="#eee" stroke="#444"/><path d="M11 11l5 5" stroke="#333" stroke-width="2.200"/></svg>
        <span class="caret-down nm-5"></span>
      </div>
      <div class="nav-seg seg-b d-flex align-items-center">
        <svg width="16" height="18" viewBox="0 0 17 18"><rect x=".5" y=".5" width="16" height="13" fill="#dde" stroke="#333"/><rect x="2" y="2" width="13" height="10" fill="#6f9fd8"/><path d="M5 17h7l-1-3H6z" fill="#ccc" stroke="#444"/></svg>
        <span class="caret-down nm-2"></span>
        <svg class="nm-7" width="16" height="16" viewBox="0 0 16 16" fill="none" stroke="#777"><rect x=".5" y=".5" width="15" height="15" fill="#b4b4b4" stroke="#555"/><path d="M4 0v16M8 0v16M12 0v16M0 4h16M0 8h16M0 12h16"/></svg>
        <span class="caret-down nm-2"></span>
      </div>
    </div>
  </div>
</div>
<script src="https://cdn.jsdelivr.net/npm/bootstrap@5.3.0/dist/js/bootstrap.bundle.min.js"></script>
</body>
</html>
